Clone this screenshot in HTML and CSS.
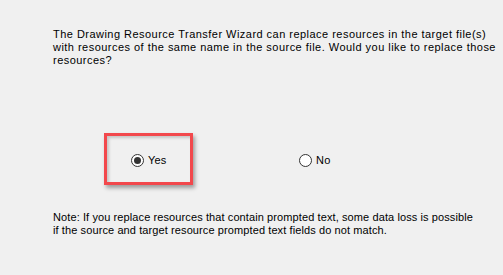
FILE: index.html
```html
<!DOCTYPE html>
<html lang="en">
<head>
    <meta charset="UTF-8">
    <title>Drawing Resource Transfer Wizard</title>
    <link rel="stylesheet" href="styles.css">
</head>
<body>

<div class="page">
    <p class="intro">The Drawing Resource Transfer Wizard can replace resources in the target file(s)<br>with resources of the same name in the source file. Would you like to replace those<br>resources?</p>

    <!-- Replace choice -->
    <div class="options">
        <div class="highlight">
            <label class="option">
                <input type="radio" name="replace" value="yes" checked>
                <span>Yes</span>
            </label>
        </div>
        <label class="option option-no">
            <input type="radio" name="replace" value="no">
            <span>No</span>
        </label>
    </div>

    <p class="note">Note: If you replace resources that contain prompted text, some data loss is possible<br>if the source and target resource prompted text fields do not match.</p>
</div>

</body>
</html>
```

FILE: styles.css
```css
body {
    margin: 0;
    background-color: #f0f0f0;
    font-family: "Liberation Sans", Arial, sans-serif;
    font-size: 11px;
    line-height: 13px;
    letter-spacing: 0.2px;
    color: #000;
}
.page {
    width: 503px;
    height: 275px;
    padding: 28px 0 0 53px;
    box-sizing: border-box;
}
.intro {
    margin: 0;
    white-space: nowrap;
    letter-spacing: 0.47px;
}
.options {
    display: flex;
    align-items: center;
    margin-top: 66px;
    margin-left: 51px;
}
.highlight {
    width: 83px;
    height: 46px;
    border: 3px solid #f2484c;
    box-sizing: content-box;
    display: flex;
    align-items: center;
    box-shadow: 2px 3px 4px rgba(0, 0, 0, 0.35), inset 2px 2px 3px rgba(0, 0, 0, 0.18);
}
.highlight .option {
    margin-left: 24px;
    margin-top: 3px;
}
.option {
    display: flex;
    align-items: center;
    gap: 4px;
}
.option-no {
    margin-left: 106px;
    margin-top: 3px;
}
.option input {
    appearance: none;
    -webkit-appearance: none;
    margin: 0;
    width: 13px;
    height: 13px;
    border: 1px solid #333;
    border-radius: 50%;
    background-color: #fff;
    box-sizing: border-box;
    display: grid;
    place-items: center;
}
.option input:checked::before {
    content: "";
    width: 7px;
    height: 7px;
    border-radius: 50%;
    background-color: #333;
}
.note {
    margin: 26px 0 0;
    white-space: nowrap;
    letter-spacing: 0.1px;
}
```
